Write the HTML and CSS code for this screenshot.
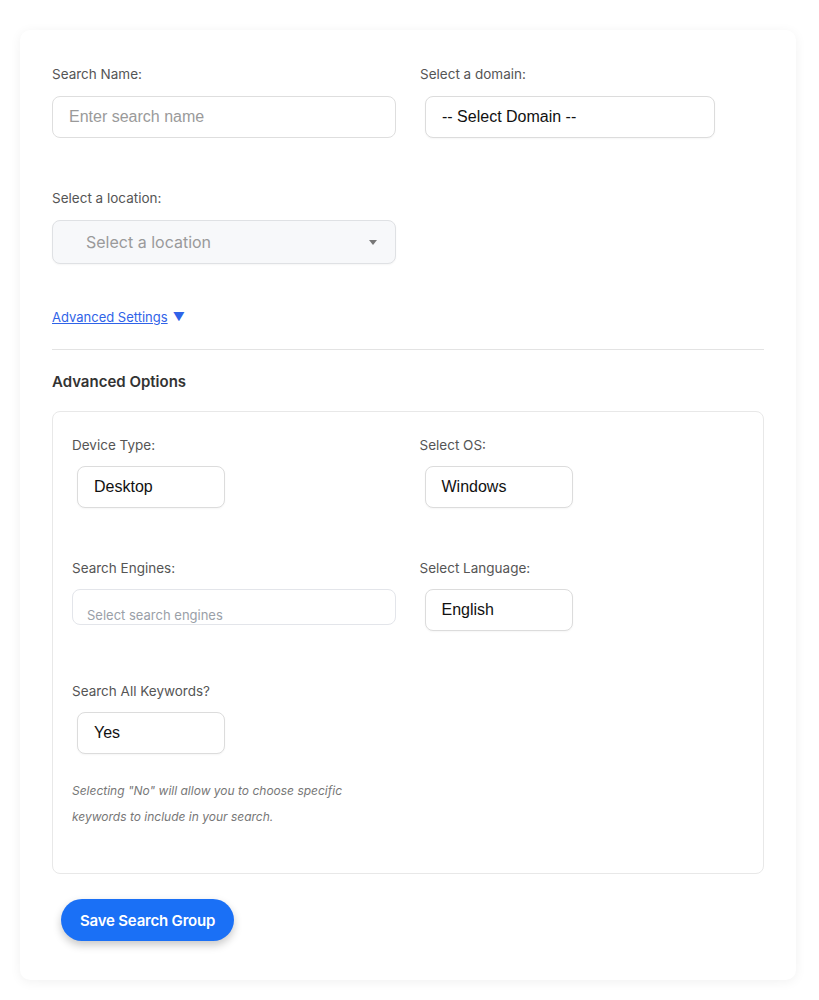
FILE: index.html
```html
<!DOCTYPE html>
<html lang="en">
<head>
<meta charset="utf-8">
<title>Search Group</title>
<link rel="stylesheet" href="styles.css">
</head>
<body>
<div class="card">
  <div class="grid">
    <div class="field">
      <div class="label">Search Name:</div>
      <div class="input placeholder">Enter search name</div>
    </div>
    <div class="field">
      <div class="label">Select a domain:</div>
      <div class="select domain">-- Select Domain --</div>
    </div>
    <div class="field">
      <div class="label">Select a location:</div>
      <div class="location">
        <span>Select a location</span>
        <span class="caret"></span>
      </div>
    </div>
  </div>

  <div class="adv-link-row">
    <a class="adv-link" href="#">Advanced Settings</a><span class="tri">▼</span>
  </div>

  <hr class="divider">

  <h3 class="heading">Advanced Options</h3>

  <div class="box">
    <div class="grid">
      <div class="field">
        <div class="label">Device Type:</div>
        <div class="select small">Desktop</div>
      </div>
      <div class="field">
        <div class="label">Select OS:</div>
        <div class="select small">Windows</div>
      </div>
      <div class="field">
        <div class="label">Search Engines:</div>
        <div class="engines"><span>Select search engines</span></div>
      </div>
      <div class="field">
        <div class="label">Select Language:</div>
        <div class="select small">English</div>
      </div>
      <div class="field last">
        <div class="label">Search All Keywords?</div>
        <div class="select small">Yes</div>
        <p class="help">Selecting "No" will allow you to choose specific keywords to include in your search.</p>
      </div>
    </div>
  </div>

  <button class="save" type="button">Save Search Group</button>
</div>
</body>
</html>
```

FILE: styles.css
```css
* { box-sizing: border-box; }

body {
  margin: 0;
  background: #ffffff;
  font-family: Inter, "Liberation Sans", Arial, sans-serif;
}

.card {
  margin: 30px 23px 20px 20px;
  padding: 34px 32px 39px;
  background: #fff;
  border-radius: 10px;
  box-shadow: 0 2px 12px rgba(0, 0, 0, 0.06);
}

.grid {
  display: grid;
  grid-template-columns: 1fr 1fr;
  column-gap: 24px;
}

.field {
  margin-bottom: 50px;
}

.label {
  font-size: 13.5px;
  line-height: 20px;
  color: #555;
  margin-bottom: 12px;
}

.box .label {
  margin-bottom: 11px;
}

.input {
  height: 42px;
  border: 1px solid #dedede;
  border-radius: 8px;
  padding: 0 16px;
  display: flex;
  align-items: center;
  font-family: "Liberation Sans", Arial, sans-serif;
  font-size: 16px;
}

.placeholder { color: #9a9a9a; }

.select {
  height: 42px;
  margin-left: 5px;
  border: 1px solid #dcdcdc;
  border-radius: 8px;
  padding: 0 16px;
  display: flex;
  align-items: center;
  font-family: "Liberation Sans", Arial, sans-serif;
  font-size: 16px;
  color: #111;
  background: #fff;
  box-shadow: 0 1px 2px rgba(0, 0, 0, 0.04);
}

.domain { width: 290px; }
.small { width: 148px; }

.location {
  height: 44px;
  border: 1px solid #dfe1e4;
  border-radius: 8px;
  background: #f7f8fa;
  padding: 0 18px 0 33px;
  display: flex;
  align-items: center;
  justify-content: space-between;
  font-family: Inter, "Liberation Sans", Arial, sans-serif;
  font-size: 16px;
  color: #9a9a9a;
  box-shadow: 0 1px 2px rgba(0, 0, 0, 0.04);
}

.caret {
  width: 0;
  height: 0;
  border-left: 4px solid transparent;
  border-right: 4px solid transparent;
  border-top: 5px solid #777;
}

.adv-link-row {
  margin-top: -7px;
  font-size: 13px;
  line-height: 20px;
}

.adv-link {
  color: #2f63e8;
  text-decoration: underline;
}

.tri {
  color: #2f63e8;
  font-size: 12px;
  margin-left: 5px;
  position: relative;
  top: -1px;
}

.divider {
  border: 0;
  border-top: 1px solid #e3e3e3;
  margin: 21px 0 0;
}

.heading {
  margin: 21px 0 18px;
  font-size: 15px;
  line-height: 22px;
  font-weight: 600;
  color: #333;
}

.box {
  border: 1px solid #e8e8e8;
  border-radius: 8px;
  padding: 23px 20px 43px 19px;
}

.engines {
  height: 36px;
  border: 1px solid #e3e5ea;
  border-radius: 8px;
  padding: 16px 14px 0;
  overflow: hidden;
  font-size: 13px;
  line-height: 18px;
  color: #9aa0a8;
}

.field.last { margin-bottom: 0; }

.help {
  width: 290px;
  margin: 24px 0 0;
  font-size: 12px;
  line-height: 26px;
  font-style: italic;
  color: #777;
}

.save {
  margin: 25px 0 0 9px;
  height: 42px;
  padding: 0 19px;
  border: 0;
  border-radius: 21px;
  background: #1a70f6;
  color: #fff;
  font-family: Inter, "Liberation Sans", Arial, sans-serif;
  font-size: 15px;
  font-weight: 600;
  letter-spacing: -0.2px;
  box-shadow: 0 4px 8px rgba(0, 0, 0, 0.22);
}
```
